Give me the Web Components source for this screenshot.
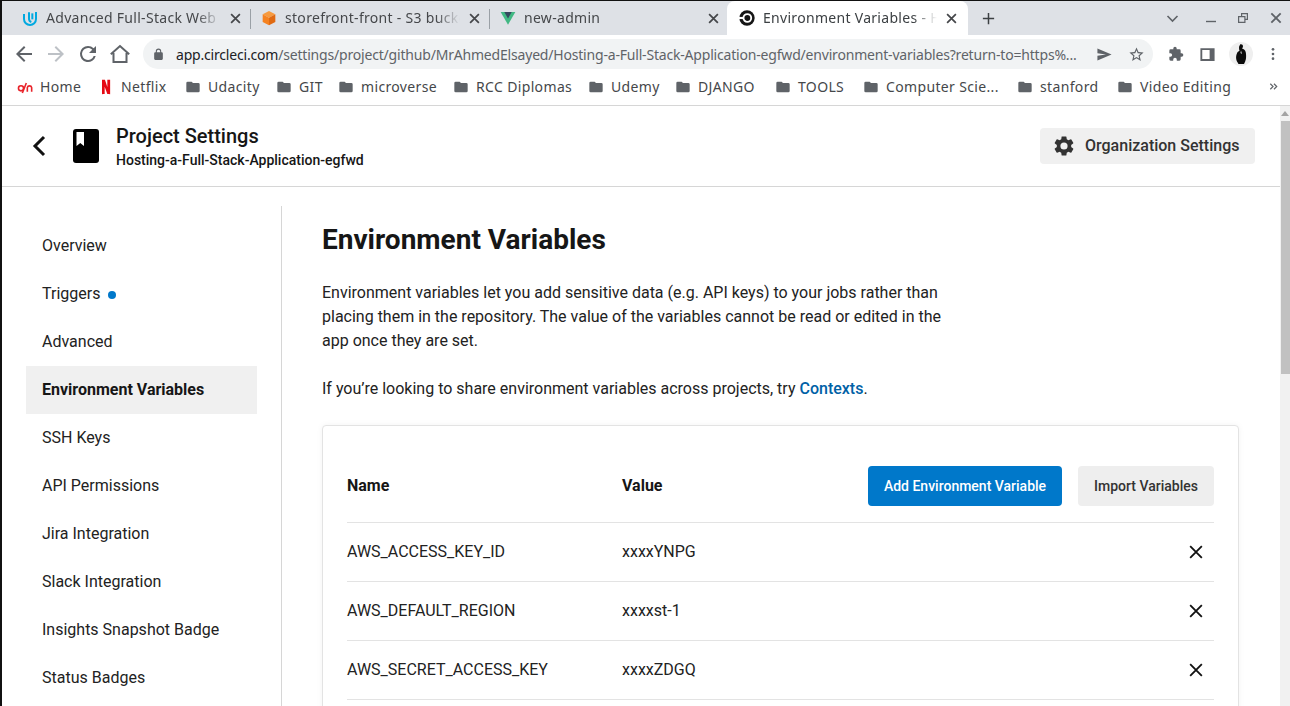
<!DOCTYPE html>
<html>
<head>
<meta charset="utf-8">
<title>Environment Variables</title>
<style>
    html, body { margin: 0; height: 100%; overflow: hidden; background: #fff; }
    body { font-family: Roboto, "Liberation Sans", sans-serif; }
</style>
</head>
<body>
<browser-window>
    <tab-strip slot="tabs">
        <chrome-tab icon="udacity" sep>Advanced Full-Stack Web Dev</chrome-tab>
        <chrome-tab icon="cube" sep>storefront-front - S3 bucket</chrome-tab>
        <chrome-tab icon="vue">new-admin</chrome-tab>
        <chrome-tab icon="circleci" active>Environment Variables - Hosting</chrome-tab>
    </tab-strip>
    <nav-toolbar slot="toolbar"></nav-toolbar>
    <bookmark-bar slot="bookmarks">
        <bookmark-item icon="oyo" w="81">Home</bookmark-item>
        <bookmark-item icon="netflix" w="87">Netflix</bookmark-item>
        <bookmark-item w="91">Udacity</bookmark-item>
        <bookmark-item w="62">GIT</bookmark-item>
        <bookmark-item w="115">microverse</bookmark-item>
        <bookmark-item w="135">RCC Diplomas</bookmark-item>
        <bookmark-item w="87">Udemy</bookmark-item>
        <bookmark-item w="100">DJANGO</bookmark-item>
        <bookmark-item w="88">TOOLS</bookmark-item>
        <bookmark-item w="154">Computer Scie...</bookmark-item>
        <bookmark-item w="100">stanford</bookmark-item>
        <bookmark-item w="130">Video Editing</bookmark-item>
    </bookmark-bar>
    <settings-page>
        <project-header slot="header"></project-header>
        <side-nav slot="nav">
            <nav-item>Overview</nav-item>
            <nav-item dot>Triggers</nav-item>
            <nav-item>Advanced</nav-item>
            <nav-item active>Environment Variables</nav-item>
            <nav-item>SSH Keys</nav-item>
            <nav-item>API Permissions</nav-item>
            <nav-item>Jira Integration</nav-item>
            <nav-item>Slack Integration</nav-item>
            <nav-item>Insights Snapshot Badge</nav-item>
            <nav-item>Status Badges</nav-item>
        </side-nav>
        <env-intro>
            <env-card>
                <env-row name="AWS_ACCESS_KEY_ID" value="xxxxYNPG"></env-row>
                <env-row name="AWS_DEFAULT_REGION" value="xxxxst-1"></env-row>
                <env-row name="AWS_SECRET_ACCESS_KEY" value="xxxxZDGQ"></env-row>
            </env-card>
        </env-intro>
    </settings-page>
</browser-window>

<script>
const ICONS = {
    back: `<path d="M20 11H7.83l5.59-5.59L12 4l-8 8 8 8 1.41-1.41L7.83 13H20z"/>`,
    reload: `<path d="M17.65 6.35A7.96 7.96 0 0 0 12 4a8 8 0 1 0 7.73 10h-2.08A6 6 0 1 1 12 6c1.66 0 3.14.69 4.22 1.78L13 11h7V4z"/>`,
    home: `<path d="M5.5 11v9h13v-9M2.8 12.2 12 4l9.2 8.2" fill="none" stroke="currentColor" stroke-width="2"/>`,
    lock: `<path d="M18 8h-1V6A5 5 0 0 0 7 6v2H6a2 2 0 0 0-2 2v10a2 2 0 0 0 2 2h12a2 2 0 0 0 2-2V10a2 2 0 0 0-2-2zM9 6a3 3 0 0 1 6 0v2H9z"/>`,
    send: `<path d="M2 20.5 22 12 2 3.5v6.6L14 12 2 13.9z"/>`,
    star: `<path d="M22 9.24l-7.19-.62L12 2 9.19 8.63 2 9.24l5.46 4.73L5.82 21 12 17.27 18.18 21l-1.63-7.03L22 9.24zM12 15.4l-3.76 2.27 1-4.28-3.32-2.88 4.38-.38L12 6.1l1.71 4.04 4.38.38-3.32 2.88 1 4.28L12 15.4z"/>`,
    puzzle: `<path d="M20.5 11H19V7a2 2 0 0 0-2-2h-4V3.5a2.5 2.5 0 0 0-5 0V5H4a2 2 0 0 0-2 2v3.8h1.5a2.7 2.7 0 0 1 0 5.4H2V20a2 2 0 0 0 2 2h3.8v-1.5a2.7 2.7 0 0 1 5.4 0V22H17a2 2 0 0 0 2-2v-4h1.5a2.5 2.5 0 0 0 0-5z"/>`,
    panel: `<path fill-rule="evenodd" d="M2 3h20v18H2zM4.6 5.6v12.8H15V5.6z"/>`,
    dots: `<circle cx="12" cy="5" r="2"/><circle cx="12" cy="12" r="2"/><circle cx="12" cy="19" r="2"/>`,
    folder: `<path d="M10 4H4a2 2 0 0 0-2 2v12a2 2 0 0 0 2 2h16a2 2 0 0 0 2-2V8a2 2 0 0 0-2-2h-8z"/>`,
    gear: `<path d="M19.14 12.94c.04-.3.06-.61.06-.94 0-.32-.02-.64-.07-.94l2.03-1.58a.49.49 0 0 0 .12-.61l-1.92-3.32a.488.488 0 0 0-.59-.22l-2.39.96c-.5-.38-1.03-.7-1.62-.94l-.36-2.54a.484.484 0 0 0-.48-.41h-3.84c-.24 0-.43.17-.47.41l-.36 2.54c-.59.24-1.13.57-1.62.94l-2.39-.96c-.22-.08-.47 0-.59.22L2.74 8.87c-.12.21-.08.47.12.61l2.03 1.58c-.05.3-.09.63-.09.94s.02.64.07.94l-2.03 1.58a.49.49 0 0 0-.12.61l1.92 3.32c.12.22.37.29.59.22l2.39-.96c.5.38 1.03.7 1.62.94l.36 2.54c.05.24.24.41.48.41h3.84c.24 0 .44-.17.47-.41l.36-2.54c.59-.24 1.13-.56 1.62-.94l2.39.96c.22.08.47 0 .59-.22l1.92-3.32c.12-.22.07-.47-.12-.61l-2.01-1.58zM12 15.6A3.6 3.6 0 1 1 12 8.4a3.6 3.6 0 0 1 0 7.2z"/>`,
    close: `<path d="M5 5l14 14M19 5 5 19" fill="none" stroke="currentColor" stroke-width="2.8"/>`,
    cross: `<path d="M5 5l14 14M19 5 5 19" fill="none" stroke="currentColor" stroke-width="2.2"/>`,
    plus: `<path d="M12 3v18M3 12h18" fill="none" stroke="currentColor" stroke-width="2.4"/>`,
    chevdown: `<path d="M4 8l8 8 8-8" fill="none" stroke="currentColor" stroke-width="2.6"/>`,
    minimize: `<path d="M2 19h20" fill="none" stroke="currentColor" stroke-width="2.8"/>`,
    restore: `<path fill-rule="evenodd" d="M8 2h14v14h-5v6H2V8h6zM10.4 4.4V8H17v5.6h2.6V4.4zM4.4 10.4v9.2h10.2v-9.2z"/>`,
    caretleft: `<path d="M16 3 7 12l9 9" fill="none" stroke="currentColor" stroke-width="3"/>`,
    more: `<path d="M5 6l6 6-6 6M13 6l6 6-6 6" fill="none" stroke="currentColor" stroke-width="2.6"/>`,
    // favicons, keep their own colours
    udacity: `<g fill="none" stroke="#02a9e0" stroke-width="3"><path d="M3 6v7.500a9 9 0 0 0 18 0V3"/><path d="M10.500 3.500v9a5.500 5.500 0 0 0 3.500 5.500"/><path d="M15.500 5v9"/></g>`,
    cube: `<path d="M12 1.500 21.500 6.500 12 11.500 2.500 6.500z" fill="#f79a3e"/><path d="M2.500 6.500 12 11.500V23l-9.500-5z" fill="#f58220"/><path d="M21.500 6.500 12 11.500V23l9.500-5z" fill="#e06a12"/>`,
    vue: `<path d="M1 3h22L12 22z" fill="#41b883"/><path d="M6.500 3h11L12 12.600z" fill="#35495e"/>`,
    circleci: `<circle cx="12" cy="12" r="11.500" fill="#161616"/><circle cx="12.500" cy="12" r="5.800" fill="none" stroke="#fff" stroke-width="2.800"/><path d="M0 10.400h7v3.200H0z" fill="#fff"/>`,
    netflix: `<path d="M6 1h4.400l3.600 11V1h4.200v22c-1.400-.2-2.800-.3-4.200-.4L10 11.600V22.400c-1.400 0-2.800.2-4 .5z" fill="#e50914"/>`,
    oyo: `<g fill="none" stroke="#e8232a" stroke-width="2.400"><circle cx="6" cy="14" r="3.800"/><path d="M8 21 14 6"/><path d="M15.500 19v-6a3.300 3.300 0 0 1 6.500 0v6"/></g>`,
    avatar: `<circle cx="12" cy="12" r="12" fill="#efefef"/><path d="M11 2.500c1.500-.8 3 .2 3 1.800 0 1-.4 1.800-1 2.300 1.800.5 3.300 1.600 3.700 3.400.5 2.300.6 5.300.1 7.500-.3 1.500-1 3-1.800 4.500H9.500c-.9-1.500-2-3-2.300-5-.3-2.300.1-4.600 1-6.300.6-1 1.500-1.500 2.300-2-.6-1.800-.8-4.700.5-5.700z" fill="#0b0b0b"/><path d="M12 8.500l1 3.500-1.500-1z" fill="#eee"/>`,
};

class UiIcon extends HTMLElement {
    constructor() {
        super();
        this.attachShadow({ mode: "open" });
    }

    connectedCallback() {
        const size = this.getAttribute("size") || 16;
        const color = this.getAttribute("color") || "currentColor";
        this.shadowRoot.innerHTML = `
        <style>
            :host { display: inline-flex; flex: none; color: ${color}; }
            svg { display: block; width: ${size}px; height: ${size}px; fill: currentColor; }
        </style>
        <svg viewBox="0 0 24 24" aria-hidden="true">${ICONS[this.getAttribute("name")] || ""}</svg>
        `;
    }
}

class BrowserWindow extends HTMLElement {
    constructor() {
        super();
        this.attachShadow({ mode: "open" });
        this.shadowRoot.innerHTML = `
        <style>
            :host {
                display: flex;
                flex-direction: column;
                height: 706px;
                box-sizing: border-box;
                border-top: 1px solid #111;
                border-left: 2px solid #111;
                overflow: hidden;
                background: #fff;
            }
        </style>
        <slot name="tabs"></slot>
        <slot name="toolbar"></slot>
        <slot name="bookmarks"></slot>
        <slot></slot>
        `;
    }
}

class TabStrip extends HTMLElement {
    constructor() {
        super();
        this.attachShadow({ mode: "open" });
        this.shadowRoot.innerHTML = `
        <style>
            :host {
                display: flex;
                align-items: stretch;
                height: 34px;
                padding-left: 10px;
                background: #dee1e6;
                color: #45474a;
            }
            .plus { display: flex; align-items: center; margin-left: 13px; color: #3c4043; }
            .ctl { margin-left: auto; display: flex; align-items: center; color: #5f6368; }
        </style>
        <slot></slot>
        <div class="plus"><ui-icon name="plus" size="15"></ui-icon></div>
        <div class="ctl">
            <ui-icon name="chevdown" size="15" style="margin-right:25px"></ui-icon>
            <ui-icon name="minimize" size="12" style="margin-right:20px"></ui-icon>
            <ui-icon name="restore" size="12" style="margin-right:19px"></ui-icon>
            <ui-icon name="close" size="16" style="margin-right:6px"></ui-icon>
        </div>
        `;
    }
}

class ChromeTab extends HTMLElement {
    constructor() {
        super();
        this.attachShadow({ mode: "open" });
    }

    connectedCallback() {
        this.shadowRoot.innerHTML = `
        <style>
            :host {
                display: flex;
                box-sizing: border-box;
                width: 239px;
                align-items: center;
                padding: 0 8px 0 10px;
                font: 14px/20px "Noto Sans", "Open Sans", sans-serif;
                letter-spacing: .3px;
                position: relative;
            }
            :host([sep])::after {
                content: "";
                position: absolute;
                right: 0; top: 8px; bottom: 6px;
                width: 1px;
                background: #9aa0a6;
            }
            :host([active]) {
                width: 241px;
                margin-left: -2px;
                padding: 0 9px 0 12px;
                background: #fff;
                border-radius: 8px 8px 0 0;
                color: #3c4043;
            }
            .title {
                flex: 1;
                min-width: 0;
                margin: 0 6px 0 8px;
                white-space: nowrap;
                overflow: hidden;
                -webkit-mask-image: linear-gradient(to right, #000 calc(100% - 24px), transparent);
                mask-image: linear-gradient(to right, #000 calc(100% - 24px), transparent);
            }
            .x { display: flex; width: 16px; justify-content: center; color: #45474a; }
        </style>
        <ui-icon name="${this.getAttribute("icon")}" size="16"></ui-icon>
        <div class="title"><slot></slot></div>
        <div class="x"><ui-icon name="close" size="15"></ui-icon></div>
        `;
    }
}

class NavToolbar extends HTMLElement {
    constructor() {
        super();
        this.attachShadow({ mode: "open" });
        this.shadowRoot.innerHTML = `
        <style>
            :host {
                display: flex;
                align-items: center;
                height: 36px;
                padding: 4px 5px 2px 10px;
                box-sizing: border-box;
                color: #5f6368;
                font: 14px "Noto Sans", "Open Sans", sans-serif;
            }
            .btns { display: flex; align-items: center; gap: 8px; }
            .omni {
                display: flex;
                align-items: center;
                box-sizing: border-box;
                height: 30px;
                width: 1010px;
                margin-left: 11px;
                padding: 0 8px 0 9px;
                background: #f1f3f4;
                border-radius: 15px;
            }
            .url {
                flex: 1;
                min-width: 0;
                margin-left: 11px;
                white-space: nowrap;
                overflow: hidden;
                color: #5f6368;
                font-size: 14px;
                letter-spacing: -.19px;
            }
            .url b { font-weight: 400; color: #202124; }
            .ext { display: flex; align-items: center; margin-left: 15px; }
        </style>
        <div class="btns">
            <ui-icon name="back" size="24"></ui-icon>
            <ui-icon name="back" size="24" color="#bdc1c6" style="transform:scaleX(-1)"></ui-icon>
            <ui-icon name="reload" size="24"></ui-icon>
            <ui-icon name="home" size="24"></ui-icon>
        </div>
        <div class="omni">
            <ui-icon name="lock" size="13"></ui-icon>
            <div class="url"><b>app.circleci.com</b>/settings/project/github/MrAhmedElsayed/Hosting-a-Full-Stack-Application-egfwd/environment-variables?return-to=https%...</div>
            <ui-icon name="send" size="17" style="margin-left:17px"></ui-icon>
            <ui-icon name="star" size="17" style="margin-left:15px"></ui-icon>
        </div>
        <div class="ext">
            <ui-icon name="puzzle" size="16"></ui-icon>
            <ui-icon name="panel" size="17" style="margin-left:15px"></ui-icon>
            <ui-icon name="avatar" size="24" style="margin-left:13px"></ui-icon>
            <ui-icon name="dots" size="16" style="margin-left:12px"></ui-icon>
        </div>
        `;
    }
}

class BookmarkBar extends HTMLElement {
    constructor() {
        super();
        this.attachShadow({ mode: "open" });
        this.shadowRoot.innerHTML = `
        <style>
            :host {
                display: flex;
                align-items: center;
                height: 35px;
                box-sizing: border-box;
                padding: 0 11px 3px 15px;
                border-bottom: 1px solid #d6d6d6;
                color: #45474a;
                font: 14px "Noto Sans", "Open Sans", sans-serif;
                letter-spacing: .35px;
            }
            .more { margin-left: auto; color: #5f6368; display: flex; }
        </style>
        <slot></slot>
        <div class="more"><ui-icon name="more" size="11"></ui-icon></div>
        `;
    }
}

class BookmarkItem extends HTMLElement {
    constructor() {
        super();
        this.attachShadow({ mode: "open" });
    }

    connectedCallback() {
        const icon = this.getAttribute("icon") || "folder";
        this.shadowRoot.innerHTML = `
        <style>
            :host {
                display: flex;
                align-items: center;
                gap: 7px;
                width: ${this.getAttribute("w")}px;
                white-space: nowrap;
            }
        </style>
        <ui-icon name="${icon}" size="16" color="#5f6368"></ui-icon>
        <slot></slot>
        `;
    }
}

class SettingsPage extends HTMLElement {
    constructor() {
        super();
        this.attachShadow({ mode: "open" });
        this.shadowRoot.innerHTML = `
        <style>
            :host {
                flex: 1;
                min-height: 0;
                display: flex;
                overflow: hidden;
                color: #161616;
            }
            .view { flex: 1; min-width: 0; display: flex; flex-direction: column; }
            .body { display: flex; flex: 1; min-height: 0; }
            .bar {
                width: 10px;
                flex: none;
                display: flex;
                flex-direction: column;
                background: #f1f1f1;
            }
            .arrow {
                height: 15px;
                display: flex;
                justify-content: center;
                align-items: center;
            }
            .arrow i {
                border: 4px solid transparent;
                border-top: 0;
                border-bottom: 5px solid #a3a3a3;
            }
            .thumb { height: 253px; margin-left: 1px; background: #c1c1c1; }
        </style>
        <div class="view">
            <slot name="header"></slot>
            <div class="body">
                <slot name="nav"></slot>
                <slot></slot>
            </div>
        </div>
        <div class="bar"><div class="arrow"><i></i></div><div class="thumb"></div></div>
        `;
    }
}

class ProjectHeader extends HTMLElement {
    constructor() {
        super();
        this.attachShadow({ mode: "open" });
        this.shadowRoot.innerHTML = `
        <style>
            :host {
                display: flex;
                align-items: center;
                flex: none;
                box-sizing: border-box;
                height: 81px;
                padding: 0 25px 0 26px;
                border-bottom: 1px solid #d6d6d6;
            }
            .book { margin-left: 21px; display: flex; }
            .names { margin-left: 17px; }
            .title { font-size: 20px; line-height: 26px; font-weight: 500; }
            .sub { font-size: 14px; line-height: 20px; font-weight: 500; margin-top: 1px; }
            button {
                margin-left: auto;
                display: flex;
                align-items: center;
                gap: 9px;
                width: 215px;
                height: 36px;
                box-sizing: border-box;
                padding: 0 0 0 12px;
                border: 0;
                border-radius: 4px;
                background: #f0f0f0;
                color: #333;
                font: 500 16px Roboto, sans-serif;
            }
            button span { margin-bottom: 2px; }
        </style>
        <ui-icon name="caretleft" size="24" color="#111"></ui-icon>
        <div class="book">
            <svg width="26" height="34" viewBox="0 0 26 34" aria-hidden="true">
                <rect width="26" height="34" rx="3" fill="#000"/>
                <path d="M3.500 3h7.500v14l-3.750-3-3.750 3z" fill="#fff"/>
            </svg>
        </div>
        <div class="names">
            <div class="title">Project Settings</div>
            <div class="sub">Hosting-a-Full-Stack-Application-egfwd</div>
        </div>
        <button><ui-icon name="gear" size="24" color="#333"></ui-icon><span>Organization Settings</span></button>
        `;
    }
}

class SideNav extends HTMLElement {
    constructor() {
        super();
        this.attachShadow({ mode: "open" });
        this.shadowRoot.innerHTML = `
        <style>
            :host {
                display: block;
                flex: none;
                box-sizing: border-box;
                width: 280px;
                margin-top: 19px;
                padding: 16px 24px 0;
                border-right: 1px solid #d6d6d6;
            }
        </style>
        <slot></slot>
        `;
    }
}

class NavItem extends HTMLElement {
    constructor() {
        super();
        this.attachShadow({ mode: "open" });
        this.shadowRoot.innerHTML = `
        <style>
            :host {
                display: flex;
                align-items: center;
                box-sizing: border-box;
                height: 48px;
                padding: 0 0 2px 16px;
                font-size: 16px;
                color: #222;
            }
            :host([active]) { background: #f0f0f0; font-weight: 700; color: #161616; }
            :host([dot])::after {
                content: "";
                width: 8px;
                height: 8px;
                margin: 4px 0 0 8px;
                border-radius: 50%;
                background: #0078ca;
            }
        </style>
        <slot></slot>
        `;
    }
}

class EnvIntro extends HTMLElement {
    constructor() {
        super();
        this.attachShadow({ mode: "open" });
        this.shadowRoot.innerHTML = `
        <style>
            :host {
                display: block;
                flex: 1;
                min-width: 0;
                padding: 35px 41px 0 40px;
            }
            h1 { margin: 0 0 23px; font-size: 28px; line-height: 36px; font-weight: 700; color: #161616; }
            p { margin: 0 0 24px; width: 625px; font-size: 16px; line-height: 24px; color: #222; }
            a { color: #0061a6; font-weight: 500; text-decoration: none; }
            p.last { width: auto; }
        </style>
        <h1>Environment Variables</h1>
        <p>Environment variables let you add sensitive data (e.g. API keys) to your jobs rather than placing them in the repository. The value of the variables cannot be read or edited in the app once they are set.</p>
        <p class="last">If you’re looking to share environment variables across projects, try <a href="#">Contexts</a>.</p>
        <slot></slot>
        `;
    }
}

class EnvCard extends HTMLElement {
    constructor() {
        super();
        this.attachShadow({ mode: "open" });
        this.shadowRoot.innerHTML = `
        <style>
            :host {
                display: block;
                box-sizing: border-box;
                padding: 40px 24px 24px;
                border: 1px solid #e3e3e3;
                border-radius: 4px;
                box-shadow: 0 0 6px rgba(0, 0, 0, .05);
                background: #fff;
            }
            .head {
                display: grid;
                grid-template-columns: 275px 1fr auto auto;
                align-items: center;
                height: 40px;
                padding-bottom: 16px;
                border-bottom: 1px solid #e3e3e3;
                font-size: 16px;
                font-weight: 700;
                color: #161616;
            }
            .head span { margin-bottom: 2px; }
            button {
                height: 40px;
                border: 0;
                border-radius: 4px;
                font: 500 14px Roboto, sans-serif;
            }
            .add { width: 194px; background: #0078ca; color: #fff; }
            .imp { width: 136px; margin-left: 16px; background: #eee; color: #333; }
        </style>
        <div class="head">
            <span>Name</span><span>Value</span>
            <button class="add">Add Environment Variable</button>
            <button class="imp">Import Variables</button>
        </div>
        <slot></slot>
        `;
    }
}

class EnvRow extends HTMLElement {
    constructor() {
        super();
        this.attachShadow({ mode: "open" });
    }

    connectedCallback() {
        this.shadowRoot.innerHTML = `
        <style>
            :host {
                display: grid;
                grid-template-columns: 275px 1fr auto;
                align-items: center;
                box-sizing: border-box;
                height: 59px;
                padding-right: 8px;
                border-bottom: 1px solid #e3e3e3;
                font-size: 16px;
                color: #222;
            }
            span { margin-bottom: 2px; }
        </style>
        <span>${this.getAttribute("name")}</span>
        <span>${this.getAttribute("value")}</span>
        <ui-icon name="cross" size="20" color="#111"></ui-icon>
        `;
    }
}

customElements.define("ui-icon", UiIcon);
customElements.define("browser-window", BrowserWindow);
customElements.define("tab-strip", TabStrip);
customElements.define("chrome-tab", ChromeTab);
customElements.define("nav-toolbar", NavToolbar);
customElements.define("bookmark-bar", BookmarkBar);
customElements.define("bookmark-item", BookmarkItem);
customElements.define("settings-page", SettingsPage);
customElements.define("project-header", ProjectHeader);
customElements.define("side-nav", SideNav);
customElements.define("nav-item", NavItem);
customElements.define("env-intro", EnvIntro);
customElements.define("env-card", EnvCard);
customElements.define("env-row", EnvRow);
</script>
</body>
</html>
